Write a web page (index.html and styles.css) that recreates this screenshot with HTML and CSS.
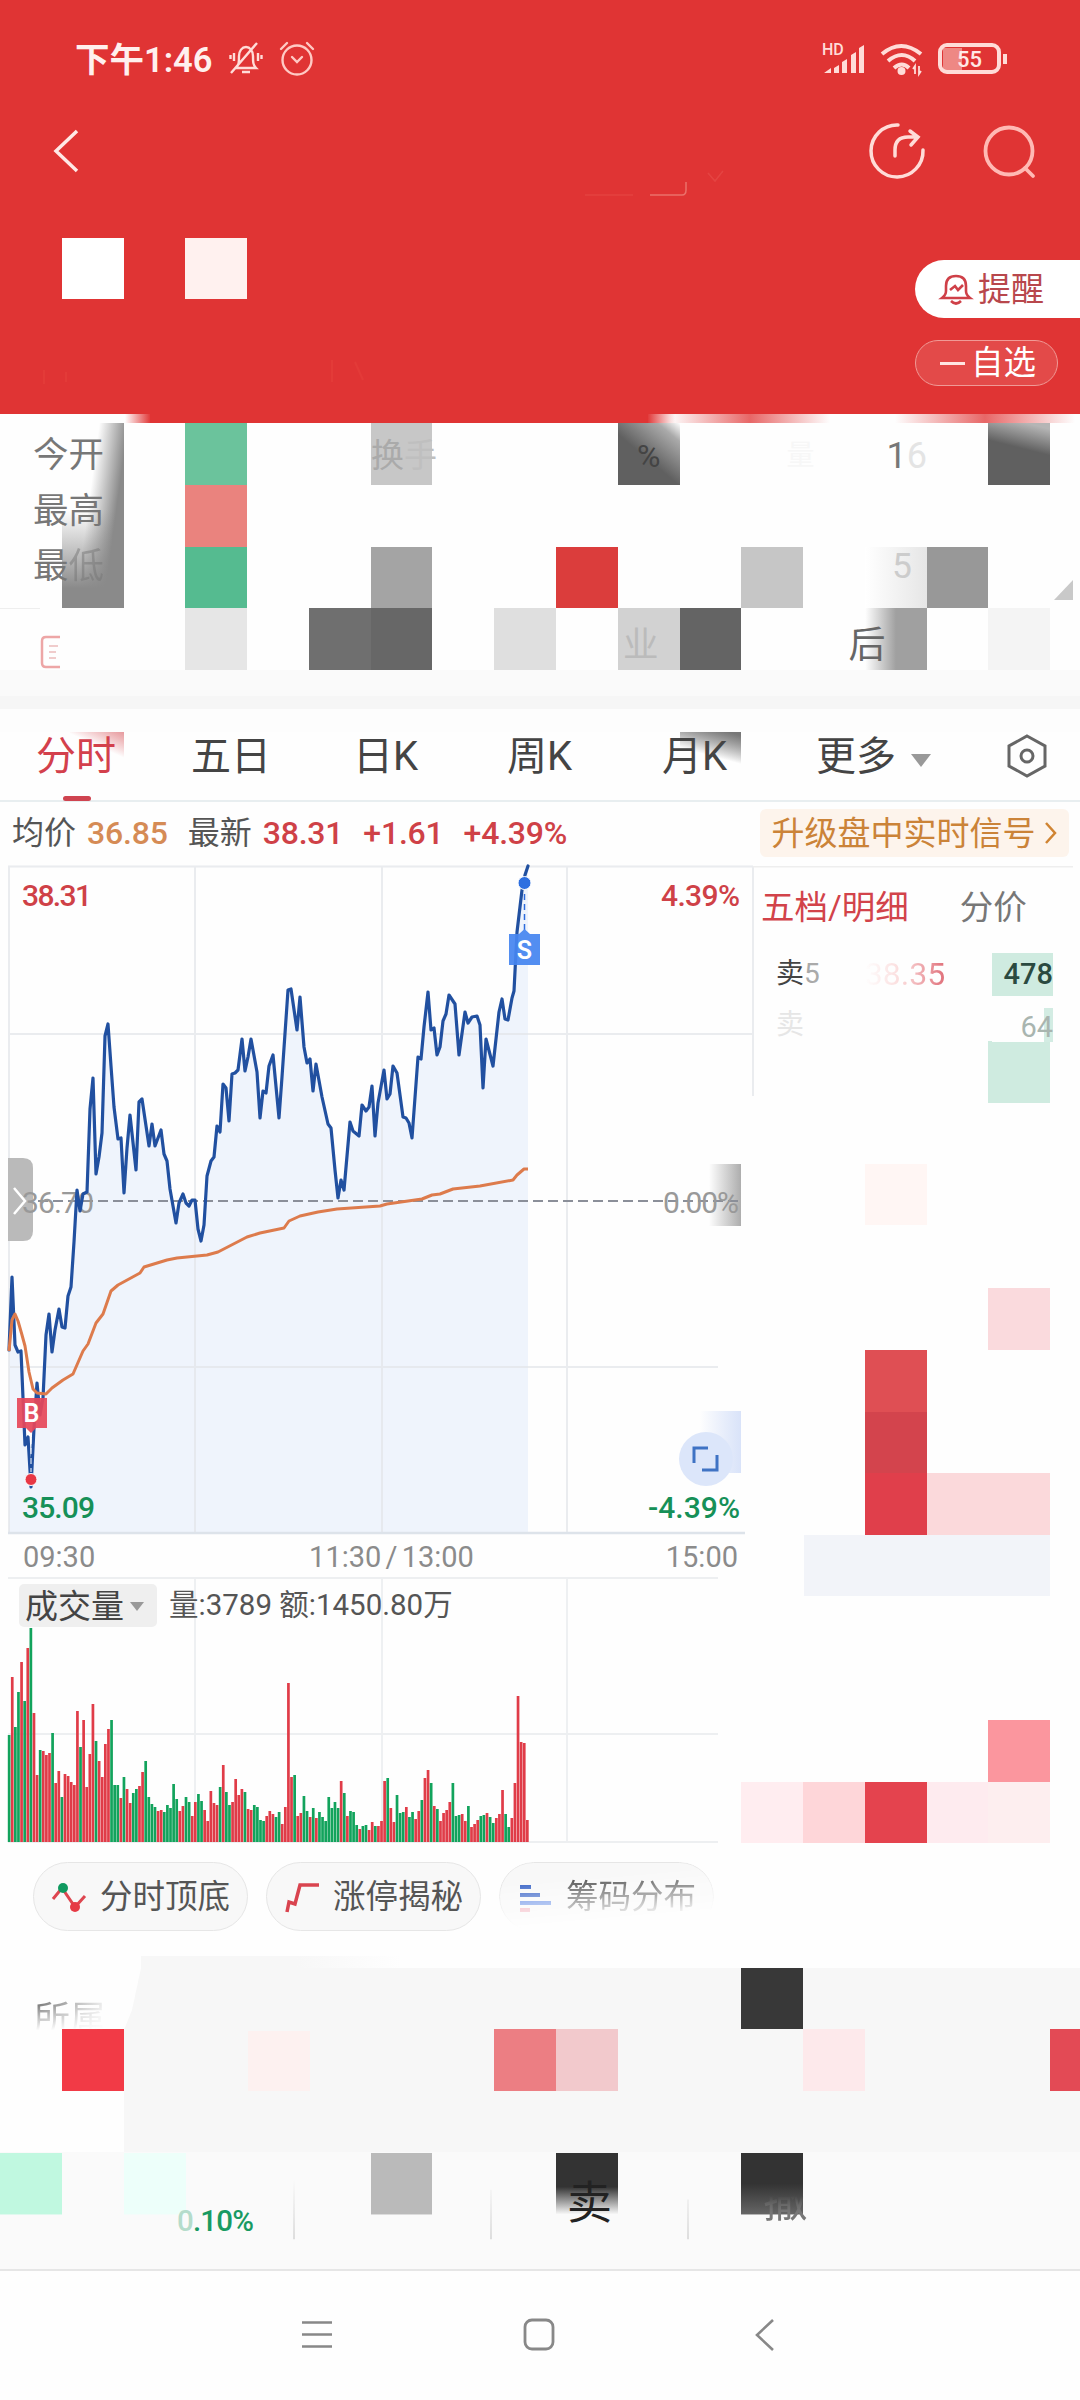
FILE: index.html
```html
<!DOCTYPE html>
<html lang="zh-CN">
<head>
    <meta charset="utf-8">
    <title>分时</title>
    <link rel="stylesheet" href="styles.css">
</head>
<body>
    <header class="header">
        <svg class="tiles" viewBox="0 0 1080 414" preserveAspectRatio="none">
            <rect x="62" y="238" width="62" height="61" fill="#fff"/>
            <rect x="185" y="238" width="62" height="61" fill="#fff1ef"/>
            <path d="M585 195h48" fill="none" stroke="#ee6a62" stroke-width="1.500" opacity=".25"/>
            <path d="M650 195h32q4 0 4-5v-8" fill="none" stroke="#f08a82" stroke-width="1.500" opacity=".7"/>
            <path d="M708 173l7 8 8-10" fill="none" stroke="#ee6a62" stroke-width="1.500" opacity=".3"/>
            <path d="M332 360v22M355 362l8 18M44 370v14M66 372v10" stroke="#e5403c" stroke-width="2" opacity=".6"/>
        </svg>
        <div class="status">
            <span class="clock">下午1:46</span>
            <svg width="36" height="36" viewBox="0 0 36 36" fill="none" stroke="#ffdcd8" stroke-width="2.400">
                <path d="M8 27c3-3 3-6 3-12 0-5 3-9 7-9s7 4 7 9c0 6 0 9 3 12zM14 31h8M3 32L29 2M6 12v8M2.500 14v4M30 12v8M33.500 14v4"/>
            </svg>
            <svg class="alarm" width="36" height="36" viewBox="0 0 36 36" fill="none" stroke="#ffc9c4" stroke-width="2.400" stroke-linecap="round">
                <circle cx="18" cy="19" r="14.500"/><path d="M2 8l6-6M34 8l-6-6M13 16l5 5 5-5"/>
            </svg>
            <svg class="signal" width="44" height="34" viewBox="0 0 44 34" fill="#ffdcd8">
                <text x="0" y="13" font-size="16" font-weight="500">HD</text>
                <path d="M2 31l7-5v5zM12 26l5-3v8h-5zM20 20l5-3v14h-5zM29 13l5-3v21h-5zM37 6l5-3v28h-5z"/>
            </svg>
            <svg class="wifi" width="44" height="34" viewBox="0 0 44 34" fill="none" stroke="#ffdcd8" stroke-width="4">
                <path d="M2 12q19-16 39 0M8 19q14-12 27 0M14 26q8-7 15 0"/>
                <circle cx="21.500" cy="29" r="2"/><path d="M35 32v-8l-2 3M39 24v8l2-3" stroke-width="1.800"/>
            </svg>
            <svg class="battery" width="70" height="34" viewBox="0 0 70 34">
                <rect x="5" y="6" width="19" height="22" fill="#ee8884"/>
                <rect x="2" y="3" width="59" height="27" rx="7" fill="none" stroke="#ffdcd8" stroke-width="4"/>
                <path d="M67 12v10" stroke="#ffdcd8" stroke-width="4"/>
                <text x="31.500" y="24.500" font-size="22" font-weight="500" text-anchor="middle" fill="#ffe9e6">55</text>
            </svg>
        </div>
        <nav class="topnav">
            <svg width="30" height="48" viewBox="0 0 30 48" fill="none" stroke="#ffe9e6" stroke-width="3.500"><path d="M26 4L5 24l21 20"/></svg>
            <svg class="share" width="60" height="60" viewBox="0 0 60 60" fill="none" stroke="#ffdcd8" stroke-width="3.500" stroke-linecap="round">
                <path d="M31 4A26 26 0 1 0 56 29M28 35v-6q0-13 13-13h8M43 10l8 6-7 8"/>
            </svg>
            <svg width="60" height="60" viewBox="0 0 60 60" fill="none" stroke="#ffb9b4" stroke-width="3.800" stroke-linecap="round">
                <circle cx="29" cy="30" r="23.500"/><path d="M45 47l8 8"/>
            </svg>
        </nav>
        <div class="actions">
            <div class="remind">
                <svg width="32" height="34" viewBox="0 0 32 34" fill="none" stroke="#cf4048" stroke-width="2.600">
                    <path d="M2 26h28q-4-3-4-7v-5q0-10-10-10T6 14v5q0 4-4 7zM11 29q5 5 10 0M10 18l5-4 3 4 5-5"/>
                </svg>
                <span>提醒</span>
            </div>
            <div class="watch"><i></i><span>自选</span></div>
        </div>
    </header>

    <section class="stats">
        <svg class="tiles" viewBox="0 414 1080 318" preserveAspectRatio="none">
            <defs>
                <linearGradient id="redL"><stop offset="0" stop-color="#e03434" stop-opacity="0"/><stop offset="1" stop-color="#e03434"/></linearGradient>
                <linearGradient id="redR"><stop offset="0" stop-color="#e03434"/><stop offset="1" stop-color="#e03434" stop-opacity="0"/></linearGradient>
                <linearGradient id="redM"><stop offset="0" stop-color="#e03434" stop-opacity="0"/><stop offset=".5" stop-color="#e03434" stop-opacity=".75"/><stop offset="1" stop-color="#e03434" stop-opacity="0"/></linearGradient>
                <linearGradient id="shade" x1="0" y1=".2" x2="1" y2=".6"><stop offset=".45" stop-color="#8a8a8a" stop-opacity="0"/><stop offset=".85" stop-color="#8a8a8a"/></linearGradient>
                <linearGradient id="low" x1="0" x2="0" y1="0" y2="1"><stop offset="0" stop-color="#8a8a8a" stop-opacity="0"/><stop offset=".8" stop-color="#8a8a8a"/></linearGradient>
                <linearGradient id="dark" x1="1" y1="0" x2=".5" y2=".6"><stop offset="0" stop-color="#fff"/><stop offset=".3" stop-color="#aaa"/><stop offset="1" stop-color="#606060"/></linearGradient>
                <linearGradient id="dark2" x1=".6" y1="0" x2=".5" y2=".4"><stop offset="0" stop-color="#b5b5b5"/><stop offset="1" stop-color="#606060"/></linearGradient>
                <linearGradient id="fade5"><stop offset="0" stop-color="#fff"/><stop offset="1" stop-color="#e6e6e6"/></linearGradient>
                <linearGradient id="fadeH"><stop offset="0" stop-color="#fff"/><stop offset=".5" stop-color="#a0a0a0"/></linearGradient>
            </defs>
            <rect x="150" y="413" width="498" height="10" fill="#e03434"/>
            <rect x="125" y="413" width="26" height="10" fill="url(#redL)"/>
            <rect x="647" y="413" width="28" height="10" fill="url(#redR)"/>
            <rect x="670" y="413" width="160" height="10" fill="url(#redM)"/>
            <rect x="895" y="413" width="180" height="10" fill="url(#redM)"/>
            <rect y="670" width="1080" height="62" fill="#fafafa"/>
            <rect y="696" width="1080" height="13" fill="#f6f6f6"/>
            <rect y="709" width="1080" height="23" fill="#fdfdfd"/>
            <rect y="608" width="40" height="1" fill="#eee"/>
            <rect x="62" y="423" width="62" height="185" fill="url(#shade)"/>
            <rect x="62" y="510" width="62" height="98" fill="url(#low)"/>
            <rect x="185" y="423" width="62" height="62" fill="#6bc39c"/>
            <rect x="185" y="485" width="62" height="62" fill="#ea837e"/>
            <rect x="185" y="547" width="62" height="61" fill="#55bb90"/>
            <rect x="185" y="608" width="62" height="62" fill="#e6e6e6"/>
            <rect x="371" y="423" width="61" height="62" fill="#c7c7c7"/>
            <rect x="371" y="547" width="61" height="61" fill="#a4a4a4"/>
            <rect x="309" y="608" width="62" height="62" fill="#6f6f6f"/>
            <rect x="371" y="608" width="61" height="62" fill="#676767"/>
            <rect x="556" y="547" width="62" height="61" fill="#db3d3c"/>
            <rect x="494" y="608" width="62" height="62" fill="#dfdfdf"/>
            <rect x="618" y="608" width="62" height="62" fill="#d2d2d2"/>
            <rect x="680" y="608" width="61" height="62" fill="#646464"/>
            <rect x="618" y="423" width="62" height="62" fill="url(#dark)"/>
            <rect x="741" y="547" width="62" height="61" fill="#c6c6c6"/>
            <rect x="865" y="547" width="62" height="61" fill="url(#fade5)"/>
            <rect x="927" y="547" width="61" height="61" fill="#989898"/>
            <rect x="865" y="608" width="62" height="62" fill="url(#fadeH)"/>
            <rect x="988" y="423" width="62" height="62" fill="url(#dark2)"/>
            <rect x="988" y="608" width="62" height="62" fill="#f4f4f4"/>
            <path d="M1054 600l19-20v20z" fill="#c9c9c9"/>
            <path d="M60 637H46q-4 0-4 4v22q0 4 4 4h14" fill="none" stroke="#eda6a6" stroke-width="2.500"/>
            <path d="M49 646h9M49 652h7M49 658h7" stroke="#f0cccc" stroke-width="2"/>
        </svg>
        <div class="row"><span class="name">今开</span><span class="turn">换<em>手</em></span><span class="pct">%</span><span class="ghost">量</span><span class="one">1<em>6</em></span></div>
        <div class="row"><span class="name">最高</span></div>
        <div class="row"><span class="name">最<em>低</em></span><span class="five">5</span></div>
        <div class="row notice"><span class="trade">业</span><span class="after">后</span></div>
    </section>

    <nav class="tabs">
        <svg class="tiles" viewBox="0 732 1080 70" preserveAspectRatio="none">
            <defs>
                <linearGradient id="tabRed" x1=".3" y1="1" x2="1" y2="0"><stop offset=".5" stop-color="#dc5a60" stop-opacity="0"/><stop offset="1" stop-color="#dc7075" stop-opacity=".7"/></linearGradient>
                <linearGradient id="tabDark" x1=".3" y1="1" x2=".8" y2="0"><stop offset=".3" stop-color="#555" stop-opacity="0"/><stop offset="1" stop-color="#777"/></linearGradient>
            </defs>
            <rect x="70" y="732" width="54" height="36" fill="url(#tabRed)"/>
            <rect x="680" y="732" width="61" height="34" fill="url(#tabDark)"/>
        </svg>
        <span class="tab active">分时</span>
        <span class="tab">五日</span>
        <span class="tab">日K</span>
        <span class="tab">周K</span>
        <span class="tab">月K</span>
        <span class="tab more">更多</span>
        <svg class="gear" width="44" height="46" viewBox="0 0 44 46" fill="none" stroke="#666" stroke-width="3"><path d="M22 3l18 10v20L22 43 4 33V13z"/><circle cx="22" cy="23" r="6"/></svg>
    </nav>

    <div class="quote">
        <span>均价</span><b class="avg">36.85</b>
        <span class="last">最新</span><b>38.31</b><b class="diff">+1.61</b><b class="rate">+4.39%</b>
        <a class="upgrade">升级盘中实时信号<svg width="14" height="26" viewBox="0 0 14 26" fill="none" stroke="#d08432" stroke-width="2.500"><path d="M2 3l9 10-9 10"/></svg></a>
    </div>

    <main class="board">
        <div class="charts">
            <svg class="price" width="755" height="680" viewBox="0 0 755 680">
                <defs>
                    <linearGradient id="zero"><stop offset="0" stop-color="#999" stop-opacity="0"/><stop offset="1" stop-color="#999" stop-opacity=".8"/></linearGradient>
                    <linearGradient id="corner"><stop offset="0" stop-color="#d5e0f8" stop-opacity="0"/><stop offset="1" stop-color="#d9e3f9"/></linearGradient>
                </defs>
                <polygon id="area" fill="#eff4fc"/>
                <path d="M8 6.500h745M8 174h745M8 507h710M195 6v667M382 6v667M567 6v667M9 6v667M753 6v230" stroke="#e3e6ea" stroke-width="2" fill="none" opacity=".75"/>
                <path d="M8 673h737" stroke="#dde3ea" stroke-width="2.500"/>
                <rect x="709" y="304" width="32" height="62" fill="url(#zero)"/>
                <path d="M8 341h733" stroke="#8b8f99" stroke-width="2" stroke-dasharray="10 5"/>
                <path d="M8 298h15q10 0 10 10v63q0 10-10 10H8z" fill="#bababa"/>
                <g font-size="30" font-weight="500">
                    <text x="22" y="46" fill="#cf4147" textLength="70">38.31</text>
                    <text x="661" y="46" fill="#cf4147" textLength="79">4.39%</text>
                    <text x="22" y="353" fill="#999" font-weight="400" textLength="72">36.70</text>
                    <text x="663" y="353" fill="#999" font-weight="400" textLength="76">0.00%</text>
                    <text x="22" y="658" fill="#169058" textLength="73">35.09</text>
                    <text x="648" y="658" fill="#169058" textLength="92">-4.39%</text>
                </g>
                <path d="M14 328l11 13-11 13" fill="none" stroke="#fff" stroke-width="2.500"/>
                <polyline id="line" fill="none" stroke="#2150a0" stroke-width="3.200" stroke-linejoin="round" stroke-linecap="round"/>
                <polyline fill="none" stroke="#dd7b4c" stroke-width="3" stroke-linejoin="round" points="9,491 12,460 15,454 18,461 22,475 25,486 29,512 33,529 37,533 46,534 52,528 63,520 73,514 83,491 88,484 96,463 103,454 111,431 118,425 140,413 144,407 167,400 177,398 207,395 218,392 247,377 260,373 284,368 289,361 300,356 318,352 337,349 380,346 387,344 422,339 432,335 440,334 453,329 480,326 513,320 517,315 524,309 528,309"/>
                <path d="M524.500 34v36" stroke="#2d6bdc" stroke-width="1.500" stroke-dasharray="6 4"/>
                <circle cx="524.500" cy="23" r="6.500" fill="#2d6fe0" stroke="#fff"/>
                <path d="M509 74h10l5.500-5 5.500 5h10v31h-31z" fill="#4685f0" fill-opacity=".93"/>
                <text class="mark" x="524.500" y="98.500" font-size="25">S</text>
                <path d="M31 578v34" stroke="#fff" stroke-width="1" stroke-dasharray="6 4"/>
                <circle cx="31" cy="619.500" r="6" fill="#e83845" stroke="#fff"/>
                <path d="M17 538h30v30H36l-5 5-5-5H17z" fill="#e6485a" fill-opacity=".93"/>
                <text class="mark" x="31.500" y="562" font-size="25">B</text>
                <rect x="700" y="551" width="41" height="62" fill="url(#corner)"/>
                <circle cx="706" cy="599" r="27" fill="#dce6fa"/>
                <path d="M708 588h-14v15M702 610h15v-15" fill="none" stroke="#3f73c4" stroke-width="3"/>
            </svg>
            <div class="times"><span>09:30</span><span>11:30 / 13:00</span><span>15:00</span></div>
            <div class="volume">
                <svg class="tiles" viewBox="0 0 755 266">
                    <path d="M8 1h710M8 157h710M8 265h710M195 1v264M382 1v264M567 1v264" stroke="#edeff1" stroke-width="1.800" fill="none"/>
                    <g id="bars"></g>
                </svg>
                <div class="vol-head"><span class="select">成交量</span><span>量:3789 额:1450.80万</span></div>
            </div>
        </div>
        <aside class="depth">
            <svg class="tiles" viewBox="741 860 339 984" preserveAspectRatio="none">
                <rect x="753" y="866" width="320" height="1.500" fill="#eee"/>
                <rect x="988" y="1041" width="62" height="62" fill="#cfebe0"/>
                <rect x="865" y="1164" width="62" height="61" fill="#fff6f4"/>
                <rect x="988" y="1288" width="62" height="62" fill="#fadadd"/>
                <rect x="865" y="1350" width="62" height="62" fill="#df4f54"/>
                <rect x="865" y="1412" width="62" height="61" fill="#d3444d"/>
                <rect x="865" y="1473" width="62" height="62" fill="#e03f4b"/>
                <rect x="927" y="1473" width="123" height="62" fill="#fbd9db"/>
                <rect x="804" y="1535" width="246" height="61" fill="#f2f4f9"/>
                <rect x="988" y="1720" width="62" height="62" fill="#fb969e"/>
                <rect x="741" y="1782" width="62" height="61" fill="#ffedf0"/>
                <rect x="803" y="1782" width="62" height="61" fill="#fed6d9"/>
                <rect x="865" y="1782" width="62" height="61" fill="#e4434e"/>
                <rect x="927" y="1782" width="61" height="61" fill="#feebef"/>
                <rect x="988" y="1782" width="62" height="61" fill="#fdeeef"/>
            </svg>
            <div class="depth-tabs"><span class="on">五档/明细</span><span>分价</span></div>
            <div class="level"><span>卖<em>5</em></span><span class="lp">38.35</span><span class="qty">478</span></div>
            <div class="level next"><span>卖</span><span class="qty">64</span></div>
        </aside>
    </main>

    <div class="tools">
        <a class="tool"><svg width="36" height="34" viewBox="0 0 36 34" fill="none" stroke="#de4650" stroke-width="3"><path d="M2 18l9-11 13 19 10-11"/><circle cx="12" cy="7" r="5" fill="#109a60" stroke="none"/><circle cx="24" cy="26" r="5" fill="#e63a45" stroke="none"/></svg><span>分时顶底</span></a>
        <a class="tool"><svg width="36" height="34" viewBox="0 0 36 34" fill="none" stroke="#d9444f" stroke-width="3.500"><path d="M3 31l2-10 6 2 5-19h19"/></svg><span>涨停揭秘</span></a>
        <a class="tool faded"><svg width="36" height="34" viewBox="0 0 36 34" stroke-width="4"><path d="M3 6h11M3 14h20" stroke="#3f68c8"/><path d="M3 22h31" stroke="#5f88e4"/><path d="M3 29h10" stroke="#f09aaa"/></svg><span>筹码分布</span></a>
    </div>

    <section class="related">
        <svg class="tiles" viewBox="0 1944 1080 208" preserveAspectRatio="none">
            <defs>
                <linearGradient id="step"><stop offset=".6" stop-color="#f7f7f7"/><stop offset="1" stop-color="#f7f7f7" stop-opacity="0"/></linearGradient>
            </defs>
            <path d="M124 2152V2030l8-20 9-42h939v184z" fill="#f7f7f7"/>
            <rect x="141" y="1956" width="260" height="13" fill="url(#step)"/>
            <rect x="741" y="1968" width="62" height="61" fill="#383838"/>
            <rect x="62" y="2029" width="62" height="62" fill="#f23a46"/>
            <rect x="248" y="2031" width="62" height="60" fill="#fdf1f0"/>
            <rect x="494" y="2029" width="62" height="62" fill="#ec7e83"/>
            <rect x="556" y="2029" width="62" height="62" fill="#f2c9cc"/>
            <rect x="803" y="2029" width="62" height="62" fill="#fde9eb"/>
            <rect x="1050" y="2029" width="30" height="62" fill="#e34a55"/>
        </svg>
        <h3>所属</h3>
    </section>

    <footer class="bottom">
        <svg class="tiles" viewBox="0 2152 1080 118" preserveAspectRatio="none">
            <defs>
                <linearGradient id="btn" x1="0" x2="0" y1="0" y2="1"><stop offset=".55" stop-color="#333"/><stop offset="1" stop-color="#fafafa"/></linearGradient>
                <linearGradient id="btn2" x1="0" x2="0" y1="0" y2="1"><stop offset=".5" stop-color="#333"/><stop offset="1" stop-color="#666"/></linearGradient>
                <linearGradient id="rule" x1="0" x2="0" y1="0" y2="1"><stop offset="0" stop-color="#ddd" stop-opacity="0"/><stop offset="1" stop-color="#ddd"/></linearGradient>
            </defs>
            <rect y="2153" width="62" height="62" fill="#c0f8e0"/>
            <rect x="124" y="2153" width="62" height="62" fill="#edfffa"/>
            <rect x="371" y="2153" width="61" height="62" fill="#bababa"/>
            <rect x="556" y="2153" width="62" height="62" fill="url(#btn)"/>
            <rect x="741" y="2153" width="62" height="62" fill="url(#btn2)"/>
            <path fill="url(#rule)" d="M293 2180h2v60h-2zM490 2190h2v50h-2zM687 2200h2v40h-2z"/>
        </svg>
        <span class="index"><em>0</em>.10%</span>
        <span class="sell">卖</span>
        <span class="cancel">撤</span>
    </footer>

    <nav class="sysnav">
        <svg width="34" height="34" viewBox="0 0 34 34" stroke="#888" stroke-width="2.600"><path d="M2 4.500h30M2 16.500h30M2 28.500h30"/></svg>
        <svg width="34" height="34" viewBox="0 0 34 34" fill="none" stroke="#888" stroke-width="2.800"><rect x="3" y="2" width="28" height="29" rx="7"/></svg>
        <svg width="34" height="34" viewBox="0 0 34 34" fill="none" stroke="#888" stroke-width="2.600"><path d="M25 2L9 17l16 15"/></svg>
    </nav>

    <script src="chart.js"></script>
</body>
</html>
```
FILE: styles.css
```css
* { box-sizing: border-box; }
body { margin: 0; width: 1080px; height: 2400px; overflow: hidden; background: #fefefe; color: #555; font-family: Roboto, "Noto Sans CJK SC", sans-serif; line-height: 1; }
svg { display: block; flex: none; overflow: visible; }
svg text { font-family: Roboto, "Noto Sans CJK SC", sans-serif; }
em { font-style: normal; }
span, a, b { white-space: nowrap; }

/* placeholder tiles behind the content of a section */
.tiles { position: absolute; left: 0; top: 0; width: 100%; height: 100%; overflow: hidden; }
.header, .stats, .tabs, .volume, .depth, .related, .bottom { position: relative; }
.header > div, .row, .tab, .vol-head, .depth-tabs, .level, .related h3, .bottom span { position: relative; }

.header { height: 414px; background: #e03434; color: #fff; }
.status { display: flex; align-items: center; height: 118px; padding: 0 72px 0 75px; }
.clock { width: 153px; padding-top: 2px; font-size: 34.500px; font-weight: 600; color: #fff0ee; }
.alarm { margin-left: 15px; }
.signal { margin-left: auto; }
.wifi { margin-left: 14px; }
.battery { margin-left: 14px; }
.topnav { display: flex; align-items: center; height: 66px; padding: 0 40px 0 51px; }
.share { margin-left: auto; margin-right: 53px; }
.actions { display: flex; flex-direction: column; align-items: flex-end; padding-top: 76px; }
.remind { display: flex; align-items: center; gap: 6px; width: 165px; height: 58px; padding-left: 25px; border-radius: 29px 0 0 29px; background: #fff; color: #b8474c; font-size: 33px; }
.watch { display: flex; align-items: center; gap: 6px; width: 143px; height: 46px; margin: 22px 22px 0 0; padding-left: 24px; border: 1.5px solid #f09a96; border-radius: 23px; background: #e34a49; font-size: 32.500px; }
.watch i { width: 25px; height: 3px; background: #ffe5e2; }

.stats { height: 318px; padding-top: 14px; }
.row { display: flex; align-items: center; height: 55.500px; padding-left: 33px; font-size: 35.500px; color: #777; }
.name { width: 338px; }
.name em { color: #777; opacity: .5; }
.turn { width: 60px; font-size: 33px; color: #aaa; }
.turn em { color: #bfbfbf; }
.pct { margin-left: 206px; font-size: 32px; color: #444; }
.ghost { margin-left: 126px; font-size: 28px; color: #f7f7f7; }
.one { margin-left: 72px; font-size: 36px; }
.one em { color: #e4e4e4; }
.five { margin-left: 521px; color: #ccc; }
.notice { height: 52px; margin-top: 25px; }
.trade { margin-left: 590px; color: #bbb; }
.after { margin-left: 190px; font-size: 37px; color: #666; }

.tabs { display: flex; align-items: flex-start; height: 70px; padding: 5px 0 0 36px; border-bottom: 2px solid #e8eef0; font-size: 40px; color: #444; }
.tab { height: 64px; width: 78px; margin-right: 77px; }
.tab:nth-of-type(2) { margin-right: 84px; }
.tab:nth-of-type(3) { width: 62px; margin-right: 92px; }
.tab:nth-of-type(4) { width: 65px; margin-right: 90px; }
.tab:nth-of-type(5) { width: 65px; margin-right: 89px; }
.tab.more { width: 115px; margin-right: 74px; }
.tab.active { color: #d3404c; }
.tab.active::after { content: ""; position: absolute; left: 27px; bottom: 0; width: 28px; height: 5px; border-radius: 3px; background: #cf4450; }
.more::after { content: ""; position: absolute; right: 0; top: 17px; border: 10px solid transparent; border-top: 13px solid #999; border-bottom: 0; }
.gear { margin-top: -4px; }

.quote { display: flex; align-items: center; height: 58px; padding: 4px 11px 0 12px; font-size: 32px; }
.quote b { margin-left: 11px; font-weight: 500; letter-spacing: -.2px; color: #cf4147; }
.quote .avg { color: #d58b55; }
.quote .last { margin-left: 20px; }
.quote .diff { margin-left: 20px; }
.quote .rate { margin-left: 20px; }
.upgrade { display: flex; align-items: center; justify-content: center; gap: 8px; width: 309px; height: 48px; margin-left: auto; border-radius: 6px; background: #fdf4ec; color: #cb8338; font-size: 33px; }

.board { display: flex; height: 984px; }
.charts { width: 741px; }
.mark { fill: #fff; font-weight: 600; text-anchor: middle; }
.times { display: flex; justify-content: space-between; align-items: center; height: 38px; margin-top: -1px; padding: 0 3px 2px 23px; font-size: 29px; color: #8b8b8b; }
.times span:nth-child(2) { margin-left: 22px; word-spacing: -3px; }
.volume { width: 755px; height: 266px; }
.vol-head { display: flex; align-items: center; gap: 12px; padding: 7px 0 0 19px; font-size: 29.500px; }
.select { display: flex; align-items: center; width: 138px; height: 43px; padding: 2px 0 0 6px; border-radius: 5px; background: #efefef; font-size: 33px; color: #444; }
.select::after { content: ""; margin-left: 6px; border: 7px solid transparent; border-top: 9px solid #999; border-bottom: 0; }

.depth { width: 339px; }
.depth-tabs { display: flex; gap: 51px; padding: 31px 0 0 20px; font-size: 33.500px; color: #777; }
.depth-tabs .on { color: #d2434a; }
.level { display: flex; align-items: center; height: 43px; margin: 28px 27px 0 35px; font-size: 28px; color: #444; }
.level em { color: #aaa; }
.lp { margin-left: 45px; font-size: 32px; background: linear-gradient(90deg, #fefefe, #fbdcdc 45%, #e0707a); -webkit-background-clip: text; color: transparent; }
.qty { width: 61px; height: 43px; margin-left: auto; background: #cfebe0; font-size: 29px; font-weight: 500; line-height: 43px; text-align: right; color: #2b4a40; }
.next { height: 36px; margin-top: 11px; color: #e6e6e6; }
.next .qty { height: 34px; line-height: 38px; background: linear-gradient(90deg, #fefefe 85%, #d3ece3 86%); color: #a9b5b0; font-weight: 400; }

.tools { display: flex; gap: 18px; height: 100px; padding: 18px 0 0 33px; }
.tool { display: flex; align-items: center; gap: 13px; width: 215px; height: 69px; padding: 2px 0 0 17px; border: 1.5px solid #e6e6e6; border-radius: 35px; background: #f8f8f8; font-size: 32.500px; }
.faded { -webkit-mask-image: linear-gradient(175deg, #000 25%, transparent 78%); mask-image: linear-gradient(175deg, #000 25%, transparent 78%); }

.related { height: 208px; }
.related h3 { margin: 0; padding: 58px 0 0 34px; width: 110px; font-size: 36px; font-weight: 400; background: linear-gradient(100deg, #777 35%, #eee 90%); -webkit-background-clip: text; color: transparent; -webkit-mask-image: linear-gradient(#000 65%, transparent 92%); }
.bottom { display: flex; height: 119px; border-bottom: 2px solid #e6e6e6; background: #fafafa; }
.index { width: 77px; margin: 55px 0 0 177px; font-size: 29.500px; font-weight: 500; letter-spacing: -.8px; color: #189a62; }
.index em { color: #b5dccb; }
.sell { margin: 29px 0 0 313px; font-size: 45px; color: #222; }
.cancel { height: 48px; margin: 27px 0 0 151px; font-size: 45px; color: #777; -webkit-mask-image: linear-gradient(transparent 35%, #000 70%); }

.sysnav { display: flex; gap: 188px; padding: 47px 0 0 300px; }
.sysnav svg:last-child { margin-left: 4px; }
```
FILE: chart.js
```js
// minute price line, in chart pixels
const price = "9,490 12,417 15,485 18,492 21,491 23,538 25,585 28,577 31,627 34,568 37,523 40,555 43,538 46,475 49,454 52,492 55,470 59,449 62,467 65,468 68,436 71,427 74,382 77,330 80,351 83,334 87,332 90,249 93,218 96,314 99,297 102,273 105,176 108,164 111,206 114,247 118,279 121,278 124,333 127,288 130,255 136,310 139,242 142,239 149,286 152,264 155,286 161,270 164,294 167,301 170,329 176,363 179,343 183,334 186,343 189,346 192,340 195,340 198,369 201,381 204,365 207,316 211,301 214,297 217,266 220,272 223,224 226,228 229,261 232,214 235,213 238,210 242,179 245,211 248,197 251,179 257,212 260,258 263,231 266,233 269,206 273,195 279,258 282,217 288,130 291,129 297,170 300,137 304,187 307,203 310,199 313,231 316,204 322,237 328,264 331,268 335,310 338,338 341,320 344,330 350,262 353,271 359,276 362,245 366,251 369,247 372,226 375,276 378,243 384,210 387,239 390,234 393,206 397,213 403,257 406,258 409,263 412,278 418,197 421,199 424,167 428,132 431,170 434,168 437,195 440,187 443,161 446,154 449,135 455,144 459,195 465,152 468,163 472,157 477,156 480,165 483,228 486,179 493,206 499,152 502,139 505,159 508,160 512,138 514,131 517,72 522,30 525,15 528,6";
document.getElementById('line').setAttribute('points', price);
document.getElementById('area').setAttribute('points', price + ' 528,673 9,673');

// volume per minute: r = up, g = down
const volume = "g107 r165 g115 g150 r180 g141 r194 g214 r129 r67 g92 r91 r87 r89 g109 r59 r71 g45 r68 r66 r60 r57 r131 g95 r122 r55 r88 r138 g101 r81 r65 r98 r113 g122 g57 g57 r44 g65 r53 r39 g49 g53 r56 r70 g81 g45 g38 g35 r31 r32 g30 g37 g34 g58 g43 r31 r36 g45 g40 r26 r40 g48 g41 r32 r21 r51 r39 r37 g55 r77 g50 g37 r40 r63 r47 r53 g50 r33 r32 g37 g35 g22 g21 r26 r31 r28 g25 g30 r18 r35 r159 r65 g67 r26 r29 g46 g31 r25 g34 r24 g30 g25 g21 g45 g34 g40 g34 r61 g49 r26 g31 g30 g17 r13 g16 g17 r12 r20 g16 r16 r21 r61 g64 r34 r20 g47 g29 g30 r35 g25 g30 r23 r31 g42 r64 r72 g59 r36 g33 r21 r29 r32 r40 g59 g26 g27 r28 r21 g36 r15 r18 r22 g26 g27 r29 g25 g19 r24 r28 r52 g28 g15 r24 r59 r146 r100 r99 r22";
document.getElementById('bars').innerHTML = volume.split(' ').map((v, i) => {
    const h = +v.slice(1);
    const color = v[0] === 'r' ? '#e03c48' : '#12a35c';
    return `<rect x="${(7.8 + i * 3.103).toFixed(2)}" y="${265 - h}" width="2.7" height="${h}" fill="${color}"/>`;
}).join('');
```
